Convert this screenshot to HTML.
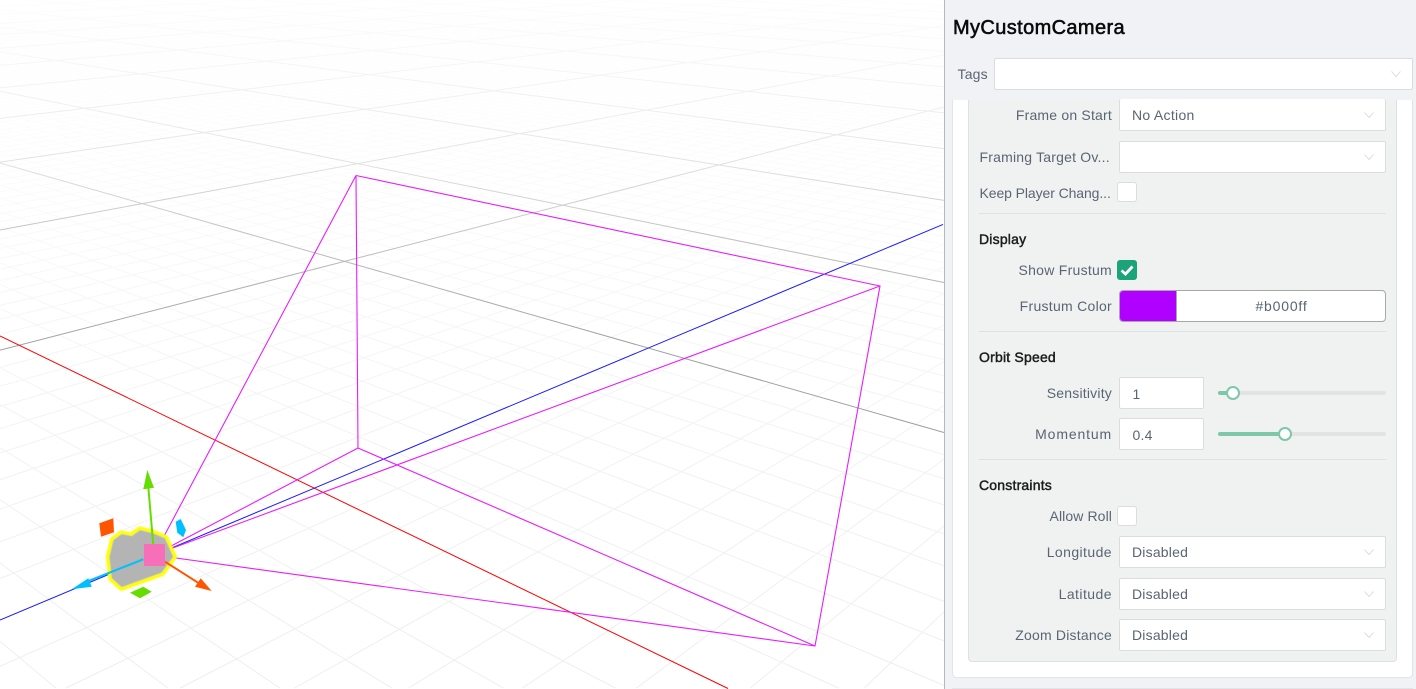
<!DOCTYPE html>
<html>
<head>
<meta charset="utf-8">
<style>
html,body{margin:0;padding:0;width:1416px;height:689px;overflow:hidden;background:#fff;font-family:"Liberation Sans",sans-serif}
#scene{position:absolute;left:0;top:0;display:block}
#side{position:absolute;left:944px;top:0;width:472px;height:689px;background:#f0f2f5;border-left:1px solid #b8b8b8;box-sizing:border-box}
.a{position:absolute;box-sizing:border-box}
.t{position:absolute;font-size:14px;line-height:20px;letter-spacing:.2px;color:#5a6573;white-space:nowrap}
.l{left:968px;width:144px;text-align:right}
.h{left:979px;color:#1c1c1c;-webkit-text-stroke:.45px #1c1c1c}
.in{position:absolute;background:#fff;border:1px solid #dcdcdc;border-radius:2px;box-sizing:border-box}
.sel{left:1119px;width:267px;height:32px}
.cb{left:1117px;width:20px;height:20px;background:#fff;border:1px solid #dcdcdc;border-radius:3px}
.hr{position:absolute;left:979px;width:407px;height:1px;background:#e0e2e2}
.chev{position:absolute;width:10px;height:6px}
.track{position:absolute;left:1218px;width:168px;height:4px;border-radius:2px;background:#e3e3e3}
.fill{position:absolute;left:1218px;height:4px;border-radius:2px;background:#7cc8a8}
.thumb{position:absolute;width:14px;height:14px;border-radius:50%;background:#fff;border:2px solid #7cc8a8;box-sizing:border-box}
#wrap{position:absolute;left:0;top:0;width:1416px;height:689px;overflow:hidden}
</style>
</head>
<body>
<svg id="scene" width="944" height="689" viewBox="0 0 944 689" xmlns="http://www.w3.org/2000/svg">
<defs>
<linearGradient id="gMin" gradientUnits="userSpaceOnUse" x1="0" y1="0" x2="0" y2="689">
<stop offset="0" stop-color="#ffffff"/><stop offset=".15" stop-color="#fdfdfd"/><stop offset=".3" stop-color="#fafafa"/><stop offset=".45" stop-color="#f6f6f6"/><stop offset=".65" stop-color="#f2f2f2"/><stop offset="1" stop-color="#eeeeee"/>
</linearGradient>
<linearGradient id="gMaj" gradientUnits="userSpaceOnUse" x1="0" y1="0" x2="0" y2="689">
<stop offset="0" stop-color="#fdfdfd"/><stop offset=".09" stop-color="#f6f6f6"/><stop offset=".16" stop-color="#eeeeee"/><stop offset=".24" stop-color="#e0e0e0"/><stop offset=".33" stop-color="#c4c4c4"/><stop offset=".5" stop-color="#a0a0a0"/><stop offset="1" stop-color="#999"/>
</linearGradient>
<filter id="soft" x="-10%" y="-10%" width="120%" height="120%"><feGaussianBlur stdDeviation=".4"/></filter>
</defs>
<rect width="944" height="689" fill="#fff"/>
<path id="minor" fill="none" stroke="url(#gMin)" stroke-width="1"/>
<path id="major" fill="none" stroke="url(#gMaj)" stroke-width="1"/>
<line x1="0" y1="336" x2="728" y2="688.500" stroke="#f00" stroke-width="1"/>
<line x1="0" y1="620" x2="943" y2="224.400" stroke="#1a1aff" stroke-width="1"/>
<g fill="none" stroke="#e81cff" stroke-width="1.1">
<path d="M356 175.500L880 286L815 646L358 448L356 175.500"/>
<path d="M154 555L356 175.500M154 555L880 286M154 555L358 448M154 555L815 646"/>
</g>
<!-- gizmo -->
<g filter="url(#soft)">
<path d="M113.300 540L121.700 534L131.700 536L140 530L153.300 533.300L165 538.300L173.300 556.700L161.700 572.700L121.700 587.300L111.700 578.300L109.300 556.700Z" fill="#ffff00" stroke="#ffff00" stroke-width="7" stroke-linejoin="round"/>
<path d="M113.300 540L121.700 534L131.700 536L140 530L153.300 533.300L165 538.300L173.300 556.700L161.700 572.700L121.700 587.300L111.700 578.300L109.300 556.700Z" fill="#b4b4b4"/>
</g>
<line x1="153.300" y1="545" x2="148.300" y2="487" stroke="#66dd00" stroke-width="2"/>
<polygon points="147.300,470 143.300,489.300 154,487.700" fill="#66dd00"/>
<line x1="143.300" y1="559.300" x2="86.700" y2="581.700" stroke="#00bfff" stroke-width="2"/>
<polygon points="71.700,589.300 88.300,578.300 91.700,586.700" fill="#00bfff"/>
<line x1="165" y1="561.700" x2="198" y2="582.700" stroke="#ff5500" stroke-width="2"/>
<polygon points="211.700,591 200.700,578.300 195,586.700" fill="#ff5500"/>
<polygon points="99.300,523.300 113.300,518.300 114,532.300 101,536.700" fill="#ff5500"/>
<polygon points="175.700,521.700 180.700,519 186,530 183.300,537.300 177.300,532.700" fill="#00bfff"/>
<polygon points="130,592.700 143.300,586.700 151.700,591.700 140,598.300" fill="#66dd00"/>
<rect x="144" y="544" width="21" height="22" fill="#f76fb8"/>
</svg>
<script>
(function(){
var a=.332,b=.328,W=944,H=688;
function P(u,v){var p=a*u,q=b*v,w=1+p+q;
return [(314-869*p+1666*q)/w,(488-85*p-79*q)/w];}
function seg(A,B){
var dx=B[0]-A[0],dy=B[1]-A[1],t0=0,t1=1;
var ps=[-dx,dx,-dy,dy],qs=[A[0],W-A[0],A[1],H-A[1]];
for(var k=0;k<4;k++){
if(ps[k]===0){if(qs[k]<0)return '';continue;}
var r=qs[k]/ps[k];
if(ps[k]<0){if(r>t1)return '';if(r>t0)t0=r;}
else{if(r<t0)return '';if(r<t1)t1=r;}
}
return 'M'+(A[0]+t0*dx).toFixed(1)+' '+(A[1]+t0*dy).toFixed(1)+'L'+(A[0]+t1*dx).toFixed(1)+' '+(A[1]+t1*dy).toFixed(1);
}
var mi='',ma='',i,c,uMin=-1.1,vMin=-1,M=22;
for(i=-11;i<=220;i++){c=i/10;
var s=seg(P(c,vMin),P(c,M));
if(i%10===0){if(i!==0)ma+=s;}else mi+=s;}
for(i=-10;i<=220;i++){c=i/10;
var s2=seg(P(uMin,c),P(M,c));
if(i%10===0){if(i!==0)ma+=s2;}else mi+=s2;}
document.getElementById('minor').setAttribute('d',mi);
document.getElementById('major').setAttribute('d',ma);
})();
</script>
<div id="side"></div>
<div id="wrap">
<!-- white card -->
<div class="a" style="left:952px;top:92px;width:461px;height:586px;background:#fff;border:1px solid #e2e4e6;border-radius:4px"></div>
<div class="a" style="left:952px;top:688px;width:461px;height:1px;background:#e2e4e6"></div>
<!-- inner panel -->
<div class="a" style="left:968px;top:80px;width:429px;height:582px;background:#f0f2f2;border:1px solid #dfe1e1;border-radius:4px"></div>
<!-- header -->
<div class="a" style="left:945px;top:0;width:471px;height:100px;background:#f0f2f5"></div>
<div class="t" style="left:953px;top:16px;font-size:20px;line-height:24px;letter-spacing:.38px;color:#0b0b0b;-webkit-text-stroke:.55px #0b0b0b">MyCustomCamera</div>
<div class="t" style="left:957.500px;top:64px;letter-spacing:.2px">Tags</div>
<div class="in" style="left:994px;top:58px;width:419px;height:32px"></div>
<svg class="chev" style="left:1391px;top:71px" viewBox="0 0 10 6"><path d="M.5.5L5 5.500L9.500.5" fill="none" stroke="#d8d8d8" stroke-width=".9"/></svg>

<!-- Frame on start -->
<div class="in sel" style="top:99px;border-top:0"></div>
<div class="t l" style="top:105px">Frame on Start</div>
<div class="t" style="left:1132px;top:105px;letter-spacing:.3px">No Action</div>
<svg class="chev" style="left:1364px;top:112px" viewBox="0 0 10 6"><path d="M.5.5L5 5.500L9.500.5" fill="none" stroke="#d8d8d8" stroke-width=".9"/></svg>

<div class="in sel" style="top:141px"></div>
<div class="t" style="left:979.500px;top:147px">Framing Target Ov...</div>
<svg class="chev" style="left:1364px;top:154px" viewBox="0 0 10 6"><path d="M.5.5L5 5.500L9.500.5" fill="none" stroke="#d8d8d8" stroke-width=".9"/></svg>

<div class="t" style="left:979.500px;top:183px;letter-spacing:-.09px">Keep Player Chang...</div>
<div class="a cb" style="top:182px"></div>
<div class="hr" style="top:213px"></div>

<div class="t h" style="top:229px">Display</div>
<div class="t l" style="top:260px;letter-spacing:.27px">Show Frustum</div>
<div class="a" style="left:1117px;top:260px;width:20px;height:20px;background:#1ba37a;border-radius:3px"></div>
<svg class="a" style="left:1117px;top:260px" width="20" height="20" viewBox="0 0 20 20"><path d="M4.500 10.500L8.500 14L15.500 6.500" fill="none" stroke="#fff" stroke-width="2.800"/></svg>

<div class="t l" style="top:296px;letter-spacing:.28px">Frustum Color</div>
<div class="a" style="left:1119px;top:290px;width:267px;height:32px;background:#fff;border:1px solid #a8a8a8;border-radius:4px;overflow:hidden">
<div style="width:56px;height:30px;background:#b000ff;border-right:1px solid #a8a8a8"></div>
</div>
<div class="t" style="left:1177px;width:209px;text-align:center;top:296px;letter-spacing:.8px">#b000ff</div>
<div class="hr" style="top:331px"></div>

<div class="t h" style="top:347px">Orbit Speed</div>
<div class="t l" style="top:383px">Sensitivity</div>
<div class="in" style="left:1119px;top:377px;width:85px;height:32px"></div>
<div class="t" style="left:1132.500px;top:384px">1</div>
<div class="track" style="top:391px"></div>
<div class="fill" style="top:391px;width:15px"></div>
<div class="thumb" style="left:1226px;top:386px"></div>

<div class="t l" style="top:424px;letter-spacing:.85px">Momentum</div>
<div class="in" style="left:1119px;top:418px;width:85px;height:32px"></div>
<div class="t" style="left:1132.500px;top:425px">0.4</div>
<div class="track" style="top:432px"></div>
<div class="fill" style="top:432px;width:67px"></div>
<div class="thumb" style="left:1278px;top:427px"></div>
<div class="hr" style="top:459px"></div>

<div class="t h" style="top:475px">Constraints</div>
<div class="t l" style="top:506px;letter-spacing:.1px">Allow Roll</div>
<div class="a cb" style="top:506px"></div>

<div class="t l" style="top:542px;letter-spacing:.42px">Longitude</div>
<div class="in sel" style="top:536px"></div>
<div class="t" style="left:1132px;top:542px">Disabled</div>
<svg class="chev" style="left:1364px;top:549px" viewBox="0 0 10 6"><path d="M.5.5L5 5.500L9.500.5" fill="none" stroke="#d8d8d8" stroke-width=".9"/></svg>

<div class="t l" style="top:584px;letter-spacing:.45px">Latitude</div>
<div class="in sel" style="top:578px"></div>
<div class="t" style="left:1132px;top:584px">Disabled</div>
<svg class="chev" style="left:1364px;top:591px" viewBox="0 0 10 6"><path d="M.5.5L5 5.500L9.500.5" fill="none" stroke="#d8d8d8" stroke-width=".9"/></svg>

<div class="t l" style="top:625px">Zoom Distance</div>
<div class="in sel" style="top:619px"></div>
<div class="t" style="left:1132px;top:625px">Disabled</div>
<svg class="chev" style="left:1364px;top:632px" viewBox="0 0 10 6"><path d="M.5.5L5 5.500L9.500.5" fill="none" stroke="#d8d8d8" stroke-width=".9"/></svg>
</div>
</body>
</html>
